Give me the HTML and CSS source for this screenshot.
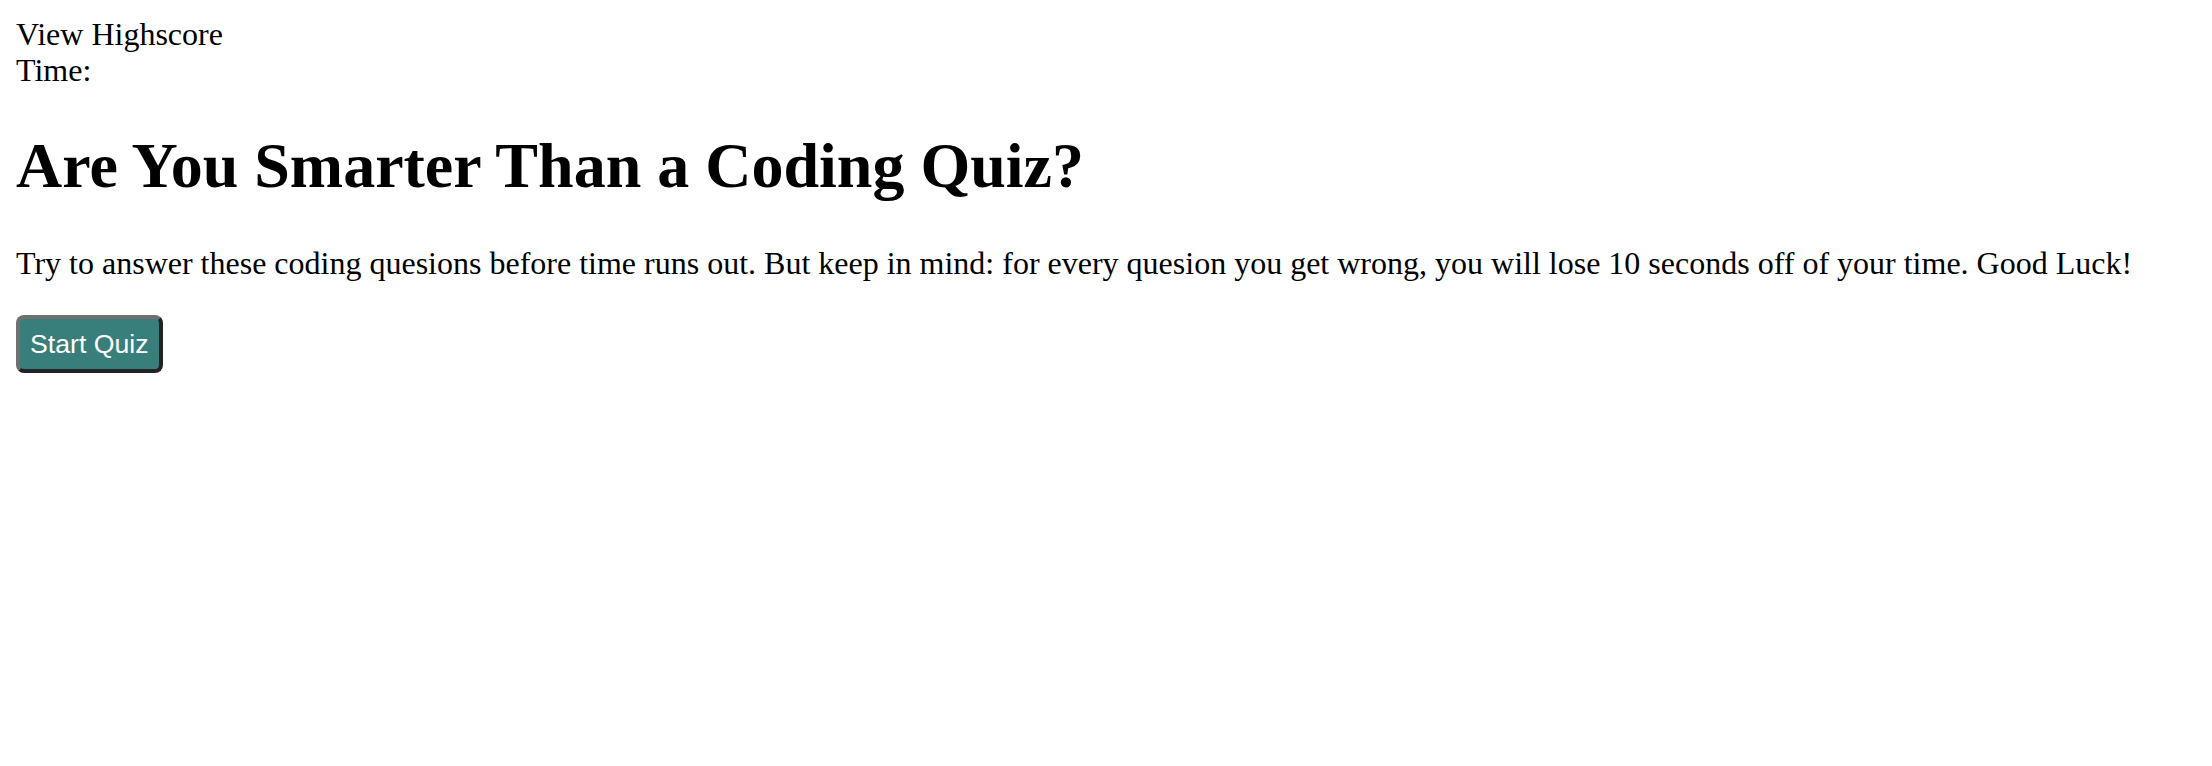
FILE: index.html
```html
<!DOCTYPE html>
<html lang="en">
<head>
<meta charset="utf-8">
<title>Coding Quiz</title>
<link rel="stylesheet" href="styles.css">
</head>
<body>
<header class="top">
  <div class="highscore">View Highscore</div>
  <div class="timer">Time: <span class="time-left"></span></div>
</header>
<main class="intro">
  <h1 class="title">Are You Smarter Than a Coding Quiz?</h1>
  <p class="lead">Try to answer these coding quesions before time runs out. But keep in mind: for every quesion you get wrong, you will lose 10 seconds off of your time. Good Luck!</p>
  <button class="start-btn" type="button">Start Quiz</button>
</main>
</body>
</html>
```
FILE: styles.css
```css
html, body {
  background: #ffffff;
}
body {
  margin: 16px;
  font-family: "Liberation Serif", "Times New Roman", serif;
  font-size: 32px;
  line-height: 36px;
  color: #000;
}
.top {
  display: block;
}
.title {
  font-size: 64px;
  line-height: 70px;
  font-weight: bold;
  margin: 42.88px 0;
}
.lead {
  margin: 32px 0 33px;
  line-height: 38px;
}
.start-btn {
  font-family: "Liberation Sans", Arial, sans-serif;
  font-size: 26.67px;
  line-height: 30px;
  color: #ffffff;
  background: #387e7b;
  border-style: solid;
  border-width: 4px;
  border-color: #707070 #232323 #232323 #707070;
  border-radius: 8px;
  padding: 10px 10px;
  margin: 0;
  cursor: pointer;
}
```
